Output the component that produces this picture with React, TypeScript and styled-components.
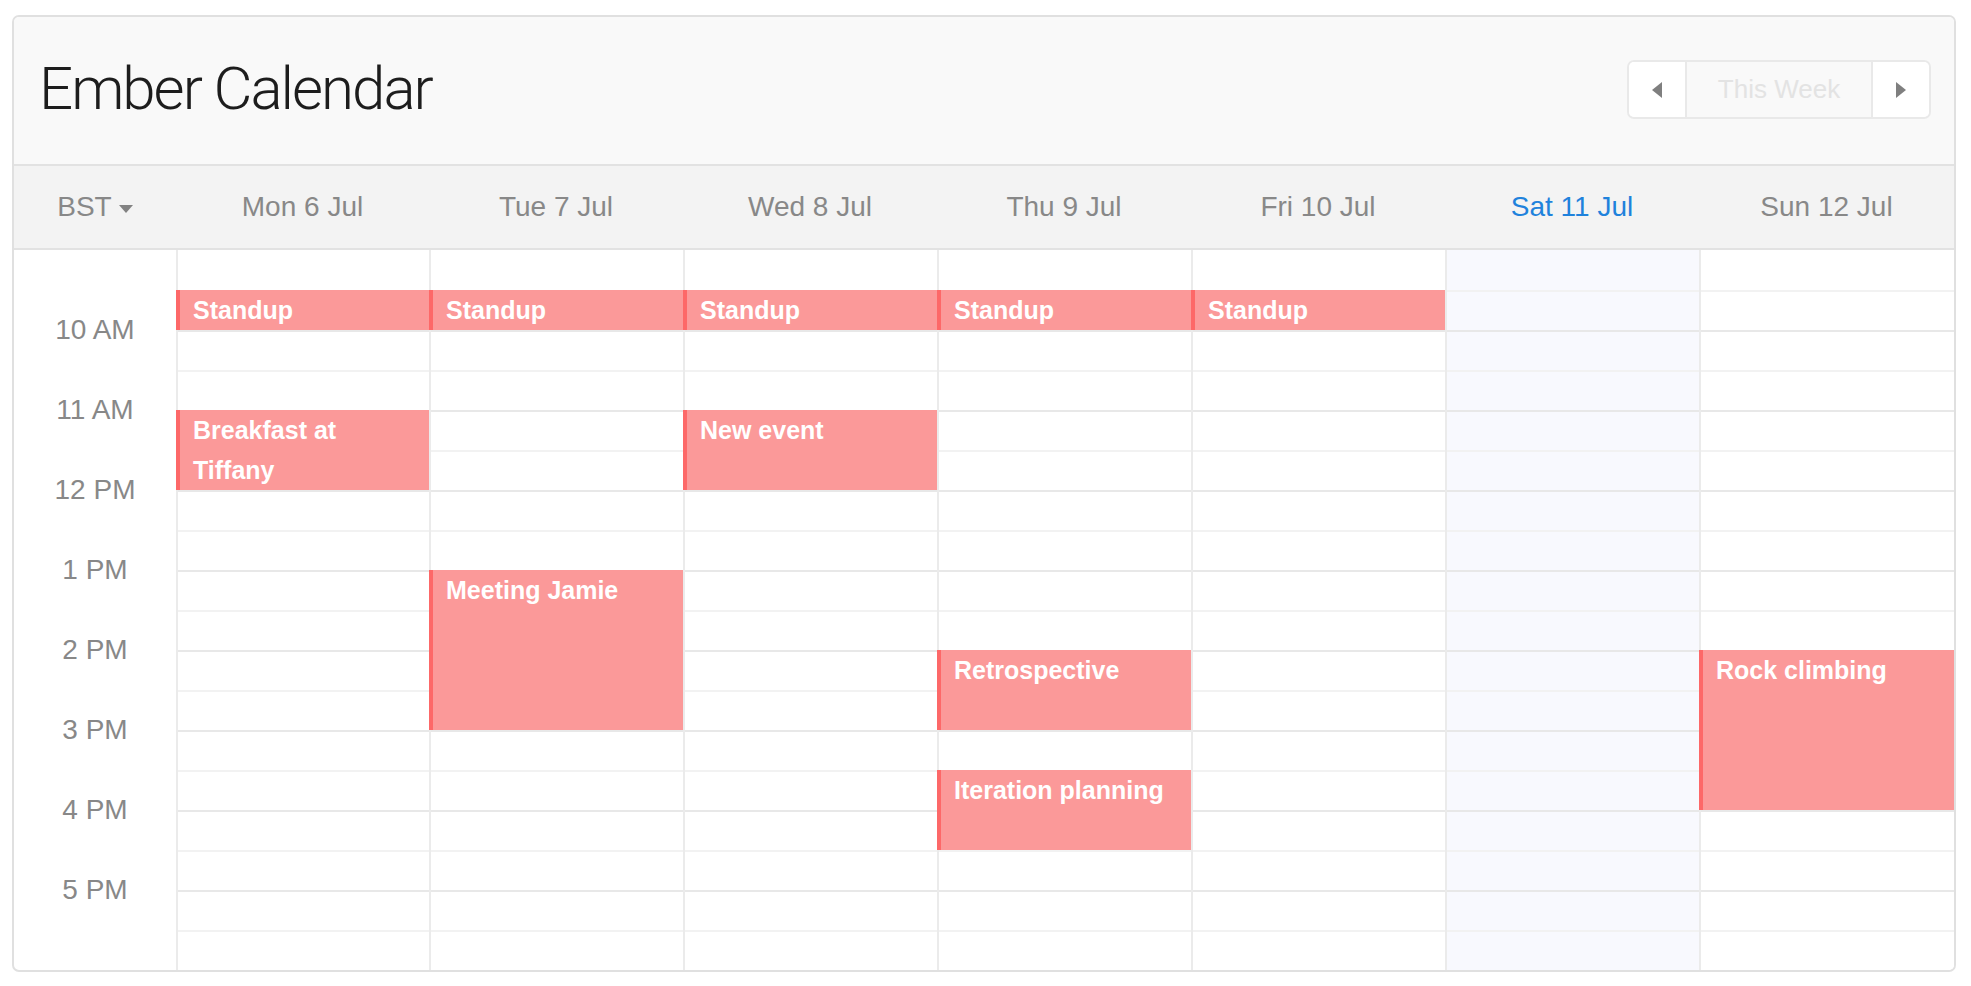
import React from "react";
import styled, { createGlobalStyle, css } from "styled-components";

const GlobalStyle = createGlobalStyle`
  html, body {
    margin: 0;
    padding: 0;
    background: #ffffff;
  }
  body {
    font-family: "Liberation Sans", Arial, "Helvetica Neue", sans-serif;
    -webkit-font-smoothing: antialiased;
  }
  * { box-sizing: border-box; }
`;

const SLOT = 40;
const START_HOUR = 9;
const END_HOUR = 18;
const TIME_WIDTH = 162;

const Page = styled.div`
  padding: 15px 15px 14px 12px;
`;

const Panel = styled.div`
  border: 2px solid #e0e0e0;
  border-radius: 7px;
  overflow: hidden;
  background: #ffffff;
`;

const PanelHeader = styled.header`
  height: 149px;
  display: flex;
  align-items: center;
  justify-content: space-between;
  padding: 0 23px 4px 25px;
  background: #f9f9f9;
  border-bottom: 2px solid #e2e2e2;
`;

const Title = styled.h1`
  margin: 0;
  font-family: Roboto, "Liberation Sans", sans-serif;
  font-weight: 300;
  font-size: 60px;
  letter-spacing: -2px;
  color: #1d1d1d;
`;

const NavGroup = styled.div`
  display: flex;
  height: 59px;
  border: 2px solid #e9e9e9;
  border-radius: 7px;
  overflow: hidden;
  margin-top: 2px;
`;

const NavButton = styled.button<{ $wide?: boolean }>`
  display: flex;
  align-items: center;
  justify-content: center;
  border: none;
  margin: 0;
  padding: 0;
  height: 100%;
  width: ${(p) => (p.$wide ? "188px" : "56px")};
  background: ${(p) => (p.$wide ? "#f9f9f9" : "#ffffff")};
  color: #e3e3e3;
  font-family: "Liberation Sans", Arial, sans-serif;
  font-size: 26px;
  ${(p) =>
    p.$wide &&
    css`
      border-left: 2px solid #e9e9e9;
      border-right: 2px solid #e9e9e9;
    `}
`;

const ColumnsRow = styled.div`
  display: grid;
  grid-template-columns: ${TIME_WIDTH}px 253px repeat(5, 254px) 1fr;
`;

const DayHeaderRow = styled(ColumnsRow)`
  height: 84px;
  background: #f3f3f3;
  border-bottom: 2px solid #e2e2e2;
`;

const HeaderCell = styled.div<{ $today?: boolean }>`
  display: flex;
  align-items: center;
  justify-content: center;
  gap: 7px;
  font-size: 28px;
  color: ${(p) => (p.$today ? "#1f82dc" : "#888888")};
`;

const Caret = styled.span`
  width: 0;
  height: 0;
  border-left: 7.5px solid transparent;
  border-right: 7.5px solid transparent;
  border-top: 8px solid #828282;
  margin-top: 3px;
`;

const TimeCol = styled.div`
  padding-top: 60px;
  height: ${(END_HOUR - START_HOUR) * 2 * SLOT}px;
`;

const TimeLabel = styled.div`
  height: ${SLOT * 2}px;
  line-height: ${SLOT}px;
  text-align: center;
  font-size: 28px;
  color: #888888;
`;

const DayCol = styled.div<{ $today?: boolean }>`
  position: relative;
  border-left: 2px solid #ebebeb;
  background: ${(p) => (p.$today ? "#f8f9fe" : "#ffffff")};
`;

const Slot = styled.div<{ $hour: boolean; $first: boolean }>`
  height: ${SLOT}px;
  border-top: ${(p) =>
    p.$first ? "none" : `2px solid ${p.$hour ? "#e8e8e8" : "#f2f2f2"}`};
`;

const EventBox = styled.div`
  position: absolute;
  left: -2px;
  right: 0;
  background: #fb9999;
  border-left: 4px solid #fd6868;
  padding: 0 8px 0 13px;
  color: #ffffff;
  font-weight: bold;
  font-size: 25px;
  line-height: 40px;
  overflow: hidden;
`;

const Arrow = ({ dir }: { dir: "left" | "right" }) => (
  <svg width="10" height="16" viewBox="0 0 10 16">
    <polygon
      points={dir === "left" ? "10,0 10,16 0,8" : "0,0 0,16 10,8"}
      fill="#7f7f7f"
    />
  </svg>
);

const days = [
  "Mon 6 Jul",
  "Tue 7 Jul",
  "Wed 8 Jul",
  "Thu 9 Jul",
  "Fri 10 Jul",
  "Sat 11 Jul",
  "Sun 12 Jul",
];
const TODAY = 5;

const hours = ["10 AM", "11 AM", "12 PM", "1 PM", "2 PM", "3 PM", "4 PM", "5 PM"];

type CalEvent = { day: number; start: number; end: number; title: string };

const events: CalEvent[] = [
  { day: 0, start: 9.5, end: 10, title: "Standup" },
  { day: 1, start: 9.5, end: 10, title: "Standup" },
  { day: 2, start: 9.5, end: 10, title: "Standup" },
  { day: 3, start: 9.5, end: 10, title: "Standup" },
  { day: 4, start: 9.5, end: 10, title: "Standup" },
  { day: 0, start: 11, end: 12, title: "Breakfast at Tiffany" },
  { day: 2, start: 11, end: 12, title: "New event" },
  { day: 1, start: 13, end: 15, title: "Meeting Jamie" },
  { day: 3, start: 14, end: 15, title: "Retrospective" },
  { day: 3, start: 15.5, end: 16.5, title: "Iteration planning" },
  { day: 6, start: 14, end: 16, title: "Rock climbing" },
];

const slotCount = (END_HOUR - START_HOUR) * 2;

export default function App() {
  return (
    <Page>
      <GlobalStyle />
      <Panel>
        <PanelHeader>
          <Title>Ember Calendar</Title>
          <NavGroup>
            <NavButton aria-label="Previous week">
              <Arrow dir="left" />
            </NavButton>
            <NavButton $wide>This Week</NavButton>
            <NavButton aria-label="Next week">
              <Arrow dir="right" />
            </NavButton>
          </NavGroup>
        </PanelHeader>
        <DayHeaderRow>
          <HeaderCell>
            BST <Caret />
          </HeaderCell>
          {days.map((d, i) => (
            <HeaderCell key={d} $today={i === TODAY}>
              {d}
            </HeaderCell>
          ))}
        </DayHeaderRow>
        <ColumnsRow>
          <TimeCol>
            {hours.map((h) => (
              <TimeLabel key={h}>{h}</TimeLabel>
            ))}
          </TimeCol>
          {days.map((d, di) => (
            <DayCol key={d} $today={di === TODAY}>
              {Array.from({ length: slotCount }, (_, si) => (
                <Slot key={si} $first={si === 0} $hour={si % 2 === 0} />
              ))}
              {events
                .filter((e) => e.day === di)
                .map((e, k) => (
                  <EventBox
                    key={k}
                    style={{
                      top: (e.start - START_HOUR) * 2 * SLOT,
                      height: (e.end - e.start) * 2 * SLOT,
                    }}
                  >
                    {e.title}
                  </EventBox>
                ))}
            </DayCol>
          ))}
        </ColumnsRow>
      </Panel>
    </Page>
  );
}
